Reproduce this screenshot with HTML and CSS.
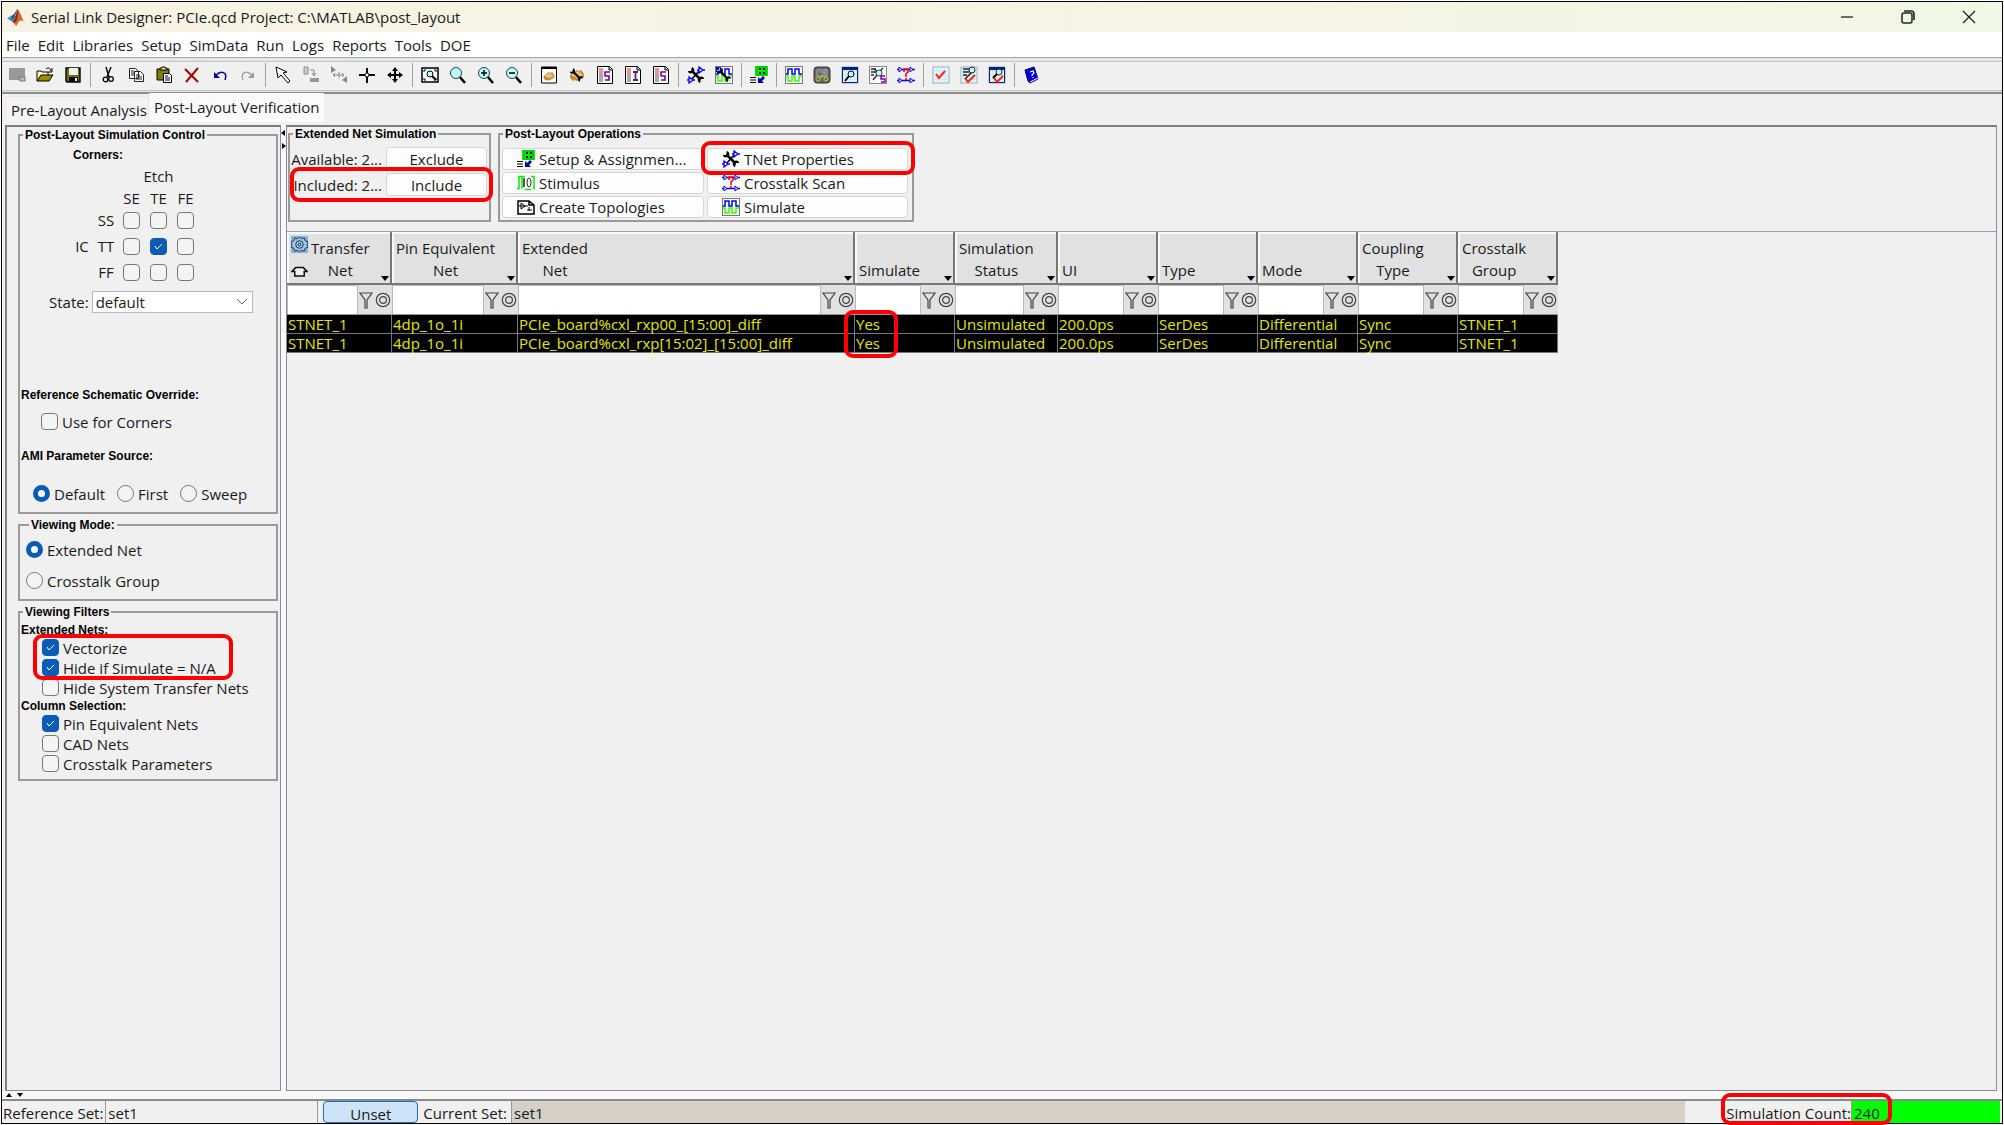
FILE: index.html
```html
<!DOCTYPE html>
<html lang="en">
<head>
<meta charset="utf-8">
<title>Serial Link Designer</title>
<link rel="stylesheet" href="styles.css">
</head>
<body>
<svg class="defs" aria-hidden="true">
  <symbol id="wrench" viewBox="0 0 18 18"><path d="M5 5l8 8" stroke="#000" stroke-width="2.600" fill="none"/><path d="M4 1v3H1M14 17v-3h3" fill="none" stroke="#f0f0f0" stroke-width="1"/><path d="M5 1c3 1 3 5 0 6-2 1-4 0-4-2l3 0zM13 17c-3-1-3-5 0-6 2-1 4 0 4 2l-3 0z"/></symbol>
  <symbol id="amps" viewBox="0 0 18 18"><path d="M2 11v6l4-3zM0 14h2M6 14h2M12 1v6l4-3zM10 4h2M16 4h2" stroke="#00f" stroke-width="1.300" fill="#fff"/></symbol>
  <symbol id="tnet" viewBox="0 0 18 18"><path d="M5 13l7-8" stroke="#000" stroke-width="1.500"/><use href="#wrench"/><use href="#amps"/></symbol>
  <symbol id="scan" viewBox="0 0 18 18"><path d="M0 3.500h18M0 14.500h18" stroke="#00f" stroke-width="1.300"/><path d="M2 1v5l3-2.500zM13 1v5l3-2.500zM2 12v5l3-2.500zM13 12v5l3-2.500z" stroke="#00f" fill="#fff"/><path d="M7 6V3h4v3L9 8v3M9 12v2" stroke="#f00" stroke-width="1.600" fill="none"/></symbol>
  <symbol id="waves" viewBox="0 0 18 18"><rect x=".5" y=".5" width="17" height="17" fill="#fff" stroke="#777"/><path d="M1 8h2V3h4v5h3V3h4v5h3" stroke="#00f" stroke-width="1.5" fill="none"/><path d="M1 10h2v5h4v-5h3v5h4v-5h3" stroke="#3f0" stroke-width="1.5" fill="none"/></symbol>
  <symbol id="assign" viewBox="0 0 18 18"><path d="M5 0h13v10H5z" fill="#0e0"/><path d="M7 1h9v8H7z" fill="none" stroke="#00b000"/><path d="M9 2h2v2H9zM13 2h2v2h-2zM9 6h2v2H9zM13 6h2v2h-2z" fill="#000"/><path d="M0 11.500h6M0 14h6M0 16.500h6" stroke="#000"/><path d="M8 11v6h6l-2-2 3-3-2-2-3 3z" fill="#00a"/></symbol>
  <symbol id="lens" viewBox="0 0 18 18"><path d="M10 10l6 7" stroke="#000" stroke-width="2.500"/><circle cx="7" cy="7" r="5.5" fill="#bff" stroke="#244"/></symbol>
  <symbol id="report" viewBox="0 0 18 18"><path d="M1.5.5h12l3 3v14h-15z" fill="#fff" stroke="#000"/><path d="M13 1v3h3" fill="#ccc" stroke="#000"/><path d="M3 3h4M3 5h4M3 7h4" stroke="#e22"/><path d="M3 9h4M3 11h4M3 13h4M3 15h4" stroke="#555"/></symbol>
  <symbol id="chip" viewBox="0 0 18 18"><path d="M2 9l7-5 2 1 2-1 3 4v3l-7 4-2-1-2 1-3-3z" fill="#c88a3a"/><path d="M3 9l7-4 5 4-6 3z" fill="#edc27c"/></symbol>
  <symbol id="sheet" viewBox="0 0 18 18"><rect x="1" y="1" width="16" height="16" fill="#eef6fc" stroke="#9ab"/><path d="M1 5h16M1 9h16M1 13h16M5 1v16M9 1v16M13 1v16" stroke="#bfe6f5"/></symbol>
  <symbol id="funnel" viewBox="0 0 14 18"><path d="M1 2h12L8 9v8H6V9z" fill="none" stroke="#444" stroke-width="1.200"/></symbol>
  <symbol id="rings" viewBox="0 0 16 16"><circle cx="8" cy="8" r="6.7" fill="none" stroke="#444" stroke-width="1.2"/><circle cx="8" cy="8" r="3.4" fill="none" stroke="#444" stroke-width="1.2"/></symbol>
</svg>

<div class="window">
  <header class="titlebar">
    <svg class="logo" viewBox="0 0 18 18"><path d="M0 10l5-3 3 2-3 4z" fill="#3d8fc4"/><path d="M5 7c3-1 4-5 6-7l-3 9-3 4z" fill="#255a86"/><path d="M11 0c3 2 4 9 7 13-3-1-5-2-8 5L5 13c3 0 5-8 6-13z" fill="#d9642a"/><path d="M11 0c1 6 0 12-2 14l-4-1c3 0 5-8 6-13z" fill="#7c2b1b"/></svg>
    <h1>Serial Link Designer: PCIe.qcd Project: C:\MATLAB\post_layout</h1>
    <div class="controls">
      <button aria-label="Minimize"><svg viewBox="0 0 14 14"><path d="M1 7h12" stroke="#333" stroke-width="1.4"/></svg></button>
      <button aria-label="Restore"><svg viewBox="0 0 14 14"><path d="M3 1h7q3 0 3 3v6" fill="none" stroke="#222" stroke-width="1.6"/><rect x="1" y="3" width="10" height="10" rx="2" fill="none" stroke="#222" stroke-width="1.5"/></svg></button>
      <button aria-label="Close"><svg viewBox="0 0 14 14"><path d="M1 1l12 12M13 1L1 13" stroke="#222" stroke-width="1.3"/></svg></button>
    </div>
  </header>

  <nav class="menu">
    <a href="#">File</a><a href="#">Edit</a><a href="#">Libraries</a><a href="#">Setup</a><a href="#">SimData</a><a href="#">Run</a><a href="#">Logs</a><a href="#">Reports</a><a href="#">Tools</a><a href="#">DOE</a>
  </nav>

  <div class="toolbar">
    <div class="group">
      <button aria-label="New"><svg viewBox="0 0 18 18"><path d="M1 2h16v13h-5l-2-1H1z" fill="#999"/><path d="M11 11h6v4h-5z" fill="#bbb" stroke="#777"/></svg></button>
      <button aria-label="Open"><svg viewBox="0 0 18 18"><path d="M1 15V5h4l1 1h6v3" fill="#ffc" stroke="#000"/><path d="M1 15l4-6h12l-4 6z" fill="#998c00" stroke="#000"/><path d="M10 3c2-2 4-1 5 2M16 2v4h-4" fill="none" stroke="#000"/></svg></button>
      <button aria-label="Save"><svg viewBox="0 0 18 18"><path d="M2 2h14v14H3l-1-1z" fill="#776f00" stroke="#000" stroke-width="1.4"/><path d="M5 2h9v7H5z" fill="#eee"/><path d="M5 11h9v5H5z" fill="#000"/><path d="M11 12h2v3h-2z" fill="#eee"/></svg></button>
    </div>
    <div class="group">
      <button aria-label="Cut"><svg viewBox="0 0 18 18"><path d="M7 1l3 10M12 1L8 11" stroke="#000" stroke-width="1.4"/><circle cx="6.500" cy="13.500" r="2.300" fill="none" stroke="#000" stroke-width="1.300"/><circle cx="12" cy="13" r="2.300" fill="none" stroke="#000" stroke-width="1.300"/></svg></button>
      <button aria-label="Copy"><svg viewBox="0 0 18 18"><path d="M2.500 2.500h6l3 3v7h-9zM7.500 5.500h6l3 3v7h-9z" fill="#fff" stroke="#222"/><path d="M4 5h3M4 7h3M4 9h3M9 9h4M9 11h6M9 13h6" stroke="#222"/></svg></button>
      <button aria-label="Paste"><svg viewBox="0 0 18 18"><path d="M2 3h12v11H2z" fill="#857c00" stroke="#000"/><path d="M5 4V2h2V1h3v1h2v2z" fill="#ee8" stroke="#000"/><path d="M8.500 7.500h6l2 2v7h-8z" fill="#fff" stroke="#000"/><path d="M10 10h3M10 12h5M10 14h5" stroke="#006"/></svg></button>
      <button aria-label="Delete"><svg viewBox="0 0 18 18"><path d="M2 3l13 13M15 2L3 16" stroke="#a00" stroke-width="2" fill="none"/></svg></button>
      <button aria-label="Undo"><svg viewBox="0 0 18 18"><path d="M5 9c5-5 12-3 9 5" fill="none" stroke="#00a" stroke-width="1.500"/><path d="M3 6v6h6z" fill="#00a"/></svg></button>
      <button aria-label="Redo"><svg viewBox="0 0 18 18"><path d="M13 9C8 4 1 6 4 14" fill="none" stroke="#999" stroke-width="1.300"/><path d="M15 6v6H9z" fill="#999"/></svg></button>
    </div>
    <div class="group">
      <button aria-label="Select"><svg viewBox="0 0 18 18"><path d="M2 1l2 11 3-3 7 8 2-2-7-8 4-1z" fill="#fff" stroke="#000"/></svg></button>
      <button aria-label="Rotate"><svg viewBox="0 0 18 18"><path d="M2 1h4v7H2z" fill="#ccc" stroke="#888"/><path d="M8 12h9v4H8z" fill="#999"/><path d="M8 4h4v5M10 7l2 3 2-3" fill="none" stroke="#888"/></svg></button>
      <button aria-label="Mirror"><svg viewBox="0 0 18 18"><path d="M1 0v7l5-3zM17 10v7l-5-3z" fill="#888"/><path d="M3 9h11M5 7l-2 2 2 2M9 6v6M12 7l2 2-2 2" stroke="#888" fill="none"/></svg></button>
      <button aria-label="Center"><svg viewBox="0 0 18 18"><path d="M9 2v5M9 11v6M1 9h6M11 9h6" stroke="#000" stroke-width="2"/><circle cx="9" cy="9" r="2" fill="#fff" stroke="#000"/></svg></button>
      <button aria-label="Pan"><svg viewBox="0 0 18 18"><path d="M9 3v12M3 9h12" stroke="#000" stroke-width="2"/><path d="M9 1l3 4H6zM9 17l3-4H6zM1 9l4-3v6zM17 9l-4-3v6z"/></svg></button>
    </div>
    <div class="group">
      <button aria-label="Zoom fit"><svg viewBox="0 0 18 18"><path d="M1 2h16v14H1z" fill="#fff" stroke="#000" stroke-width="1.500"/><path d="M3 12v2h2M15 12v2h-2M3 6V4h2M15 6V4h-2" stroke="#000" fill="none"/><circle cx="9" cy="8" r="3" fill="#bff" stroke="#000"/><path d="M11 10l4 4" stroke="#000" stroke-width="2"/></svg></button>
      <button aria-label="Zoom"><svg><use href="#lens"/></svg></button>
      <button aria-label="Zoom in"><svg viewBox="0 0 18 18"><use href="#lens"/><path d="M4 7h6M7 4v6" stroke="#000" stroke-width="1.500"/></svg></button>
      <button aria-label="Zoom out"><svg viewBox="0 0 18 18"><use href="#lens"/><path d="M4 7h6" stroke="#000" stroke-width="1.500"/></svg></button>
    </div>
    <div class="group">
      <button aria-label="Part"><svg viewBox="0 0 18 18"><path d="M1.500 1v16h15V1z" fill="#fff" stroke="#000"/><path d="M1 1h16v2H1z"/><use href="#chip" x="2" y="3" width="14" height="14"/></svg></button>
      <button aria-label="Part setup"><svg viewBox="0 0 18 18"><use href="#chip"/><use href="#wrench" x="1" y="1" width="15" height="16"/></svg></button>
      <button aria-label="S report"><svg viewBox="0 0 18 18"><use href="#report"/><path d="M14 6H9v4h4v4H9" fill="none" stroke="#70a" stroke-width="1.600"/></svg></button>
      <button aria-label="I report"><svg viewBox="0 0 18 18"><use href="#report"/><path d="M9 6h5M9 14h5M11.500 6v8" fill="none" stroke="#527" stroke-width="1.800"/></svg></button>
      <button aria-label="Summary"><svg viewBox="0 0 18 18"><use href="#report"/><path d="M14 6H9v4h4v4H9" fill="none" stroke="#70a" stroke-width="1.600"/></svg></button>
    </div>
    <div class="group">
      <button aria-label="Net setup"><svg><use href="#tnet"/></svg></button>
      <button aria-label="Waveform setup"><svg viewBox="0 0 18 18"><use href="#waves"/><path d="M1 1h5v5H1z" fill="#00c"/><use href="#wrench" x="1" y="1" width="16" height="16"/></svg></button>
    </div>
    <div class="group"><button aria-label="Assign"><svg><use href="#assign"/></svg></button></div>
    <div class="group">
      <button aria-label="Simulate"><svg><use href="#waves"/></svg></button>
      <button aria-label="Queue"><svg viewBox="0 0 18 18"><rect x="1" y="1" width="16" height="16" rx="3" fill="#666" stroke="#333"/><path d="M4 4h10v6H4zM6 6h5M12 3v9M7 11l5-5" stroke="#aaa" fill="none"/><circle cx="5" cy="13" r="2" fill="none" stroke="#ad0"/><circle cx="13" cy="13" r="2" fill="none" stroke="#ad0"/><path d="M7 12l4-2" stroke="#ad0"/></svg></button>
      <button aria-label="Results"><svg viewBox="0 0 18 18"><use href="#sheet"/><path d="M1.500 1.500h15v15h-15z" fill="none" stroke="#028"/><path d="M1 1h16v3H1z" fill="#028"/><circle cx="10" cy="8" r="3" fill="#bff" stroke="#000"/><path d="M8 10l-4 5" stroke="#000" stroke-width="2"/></svg></button>
      <button aria-label="Report view"><svg viewBox="0 0 18 18"><rect x=".5" y=".5" width="17" height="17" fill="#fff" stroke="#888"/><path d="M2 3h5M2 6h5M2 9h3M5 3l4 3M14 2l-3 3M8 9l-4 5" stroke="#222" stroke-width="1.300"/><circle cx="10" cy="7" r="3" fill="#bff" stroke="#246"/><path d="M16 10h-4v3h4v3h-4" fill="none" stroke="#70a" stroke-width="1.500"/></svg></button>
      <button aria-label="Crosstalk scan"><svg><use href="#scan"/></svg></button>
    </div>
    <div class="group">
      <button aria-label="Check"><svg viewBox="0 0 18 18"><use href="#sheet"/><path d="M4 8l3 4 6-7" fill="none" stroke="#f20" stroke-width="2"/></svg></button>
      <button aria-label="Check report"><svg viewBox="0 0 18 18"><use href="#sheet"/><path d="M3 3h6M3 6h6M3 9h4M5 13l7-7" stroke="#222" stroke-width="1.500"/><circle cx="12" cy="4" r="3" fill="#bff" stroke="#222"/><path d="M5 12l3 4 7-7" fill="none" stroke="#f20" stroke-width="2"/></svg></button>
      <button aria-label="Check results"><svg viewBox="0 0 18 18"><use href="#sheet"/><path d="M1.500 1.500h15v15h-15z" fill="none" stroke="#028"/><path d="M1 1h16v3H1z" fill="#028"/><circle cx="11" cy="6" r="3" fill="#bff" stroke="#222"/><path d="M9 8l-4 4" stroke="#000" stroke-width="2"/><path d="M6 12l3 4 6-6" fill="none" stroke="#f20" stroke-width="2"/></svg></button>
    </div>
    <div class="group">
      <button aria-label="Help"><svg viewBox="0 0 18 18"><path d="M2 4l9-3 4 12-8 4-2-2z" fill="#00d" stroke="#006"/><path d="M7 16l8-4" stroke="#fff"/><path d="M7 6l3-1 1 2-2 2v1M10 11v1" fill="none" stroke="#fff" stroke-width="1.200"/></svg></button>
    </div>
  </div>

  <div class="tabs" role="tablist">
    <button role="tab">Pre-Layout Analysis</button>
    <button role="tab" class="active" aria-selected="true">Post-Layout Verification</button>
  </div>

  <div class="main">
    <aside class="side">
      <fieldset class="box sim">
        <legend>Post-Layout Simulation Control</legend>
        <h2 class="corners-title">Corners:</h2>
        <div class="corners">
          <span class="etch">Etch</span>
          <span class="c3">SE</span><span>TE</span><span>FE</span>
          <span class="c2">SS</span><input type="checkbox" aria-label="SS SE"><input type="checkbox" aria-label="SS TE"><input type="checkbox" aria-label="SS FE">
          <span>IC</span><span>TT</span><input type="checkbox" aria-label="TT SE"><input type="checkbox" aria-label="TT TE" checked><input type="checkbox" aria-label="TT FE">
          <span class="c2">FF</span><input type="checkbox" aria-label="FF SE"><input type="checkbox" aria-label="FF TE"><input type="checkbox" aria-label="FF FE">
        </div>
        <div class="state">
          <label for="state">State:</label>
          <select id="state"><option>default</option></select>
        </div>
        <h2>Reference Schematic Override:</h2>
        <label class="opt use"><input type="checkbox">Use for Corners</label>
        <h2>AMI Parameter Source:</h2>
        <div class="radios">
          <label class="opt"><input type="radio" name="ami" checked>Default</label>
          <label class="opt"><input type="radio" name="ami">First</label>
          <label class="opt"><input type="radio" name="ami">Sweep</label>
        </div>
      </fieldset>
      <fieldset class="box mode">
        <legend>Viewing Mode:</legend>
        <label class="opt"><input type="radio" name="mode" checked>Extended Net</label>
        <label class="opt"><input type="radio" name="mode">Crosstalk Group</label>
      </fieldset>
      <fieldset class="box filters">
        <legend>Viewing Filters</legend>
        <h2>Extended Nets:</h2>
        <div class="checks">
          <label class="opt"><input type="checkbox" checked>Vectorize</label>
          <label class="opt"><input type="checkbox" checked>Hide if Simulate = N/A</label>
          <label class="opt"><input type="checkbox">Hide System Transfer Nets</label>
          <span class="mark mark-filters"></span>
        </div>
        <h2>Column Selection:</h2>
        <div class="checks">
          <label class="opt"><input type="checkbox" checked>Pin Equivalent Nets</label>
          <label class="opt"><input type="checkbox">CAD Nets</label>
          <label class="opt"><input type="checkbox">Crosstalk Parameters</label>
        </div>
      </fieldset>
    </aside>

    <div class="splitter"><svg viewBox="0 0 5 22"><path d="M4 1v6L0 4zM1 14v6l4-3z"/></svg></div>

    <section class="content">
      <div class="panels">
        <fieldset class="box netsim">
          <legend>Extended Net Simulation</legend>
          <div class="netrows">
            <span>Available: 2...</span><button class="btn">Exclude</button>
            <span>Included: 2...</span><button class="btn">Include</button>
            <i class="mark mark-included"></i>
          </div>
        </fieldset>
        <fieldset class="box ops">
          <legend>Post-Layout Operations</legend>
          <div class="opgrid">
            <button class="btn"><svg><use href="#assign"/></svg>Setup &amp; Assignmen...</button>
            <button class="btn"><svg><use href="#tnet"/></svg>TNet Properties</button>
            <button class="btn"><svg viewBox="0 0 18 18"><path d="M0 14.500h2v-12h3M14 2.500h3v12h1M5 2.500v12M5 2.500h3M8 15.500h6" fill="none" stroke="#0e0" stroke-width="1.500"/><path d="M7 4v9" stroke="#222" stroke-width="1.500"/><ellipse cx="12" cy="8.500" rx="2" ry="4.500" fill="none" stroke="#222"/></svg>Stimulus</button>
            <button class="btn"><svg><use href="#scan"/></svg>Crosstalk Scan</button>
            <button class="btn"><svg viewBox="0 0 18 18"><path d="M1 3h11l5 4v9H1zM12 3v4h5" fill="#fff" stroke="#000" stroke-width="1.500"/><path d="M4 5v6l4-3zM2 8h9M10 12h5M12 9v4" fill="none" stroke="#000"/></svg>Create Topologies</button>
            <button class="btn"><svg><use href="#waves"/></svg>Simulate</button>
            <i class="mark mark-tnet"></i>
          </div>
        </fieldset>
      </div>
      <div class="scroll">
        <table>
          <colgroup><col class="w-transfer"><col class="w-pin"><col class="w-ext"><col><col class="w-status"><col><col><col><col><col></colgroup>
          <thead>
            <tr>
              <th><div class="head"><span class="hicons"><svg viewBox="0 0 18 18"><path d="M0 0h18v18H0z" fill="#7fb3e0"/><path d="M9 1l2 2 3-1 1 3 3 1-1 3 1 3-3 1-1 3-3-1-2 2-2-2-3 1-1-3-3-1 1-3-1-3 3-1 1-3 3 1z" fill="#9cc6ea" stroke="#234"/><circle cx="9" cy="9" r="4" fill="none" stroke="#234"/><circle cx="9" cy="9" r="1.500" fill="none" stroke="#234"/></svg><svg viewBox="0 0 18 18"><path d="M4 16v-5H1l4-4h8l4 4h-3v5z" fill="#eee" stroke="#111" stroke-width="1.600"/></svg></span><span>Transfer<br>Net</span><b class="arrow"></b></div></th>
              <th><div class="head"><span>Pin Equivalent<br>Net</span><b class="arrow"></b></div></th>
              <th><div class="head"><span>Extended<br>Net</span><b class="arrow"></b></div></th>
              <th><div class="head"><span>Simulate</span><b class="arrow"></b></div></th>
              <th><div class="head"><span>Simulation<br>Status</span><b class="arrow"></b></div></th>
              <th><div class="head"><span>UI</span><b class="arrow"></b></div></th>
              <th><div class="head"><span>Type</span><b class="arrow"></b></div></th>
              <th><div class="head"><span>Mode</span><b class="arrow"></b></div></th>
              <th><div class="head"><span>Coupling<br>Type</span><b class="arrow"></b></div></th>
              <th><div class="head"><span>Crosstalk<br>Group</span><b class="arrow"></b></div></th>
            </tr>
            <tr class="filter">
              <td><div><input aria-label="Filter transfer net"><svg class="fn"><use href="#funnel"/></svg><svg class="rg"><use href="#rings"/></svg></div></td>
              <td><div><input aria-label="Filter pin equivalent net"><svg class="fn"><use href="#funnel"/></svg><svg class="rg"><use href="#rings"/></svg></div></td>
              <td><div><input aria-label="Filter extended net"><svg class="fn"><use href="#funnel"/></svg><svg class="rg"><use href="#rings"/></svg></div></td>
              <td><div><input aria-label="Filter simulate"><svg class="fn"><use href="#funnel"/></svg><svg class="rg"><use href="#rings"/></svg></div></td>
              <td><div><input aria-label="Filter status"><svg class="fn"><use href="#funnel"/></svg><svg class="rg"><use href="#rings"/></svg></div></td>
              <td><div><input aria-label="Filter UI"><svg class="fn"><use href="#funnel"/></svg><svg class="rg"><use href="#rings"/></svg></div></td>
              <td><div><input aria-label="Filter type"><svg class="fn"><use href="#funnel"/></svg><svg class="rg"><use href="#rings"/></svg></div></td>
              <td><div><input aria-label="Filter mode"><svg class="fn"><use href="#funnel"/></svg><svg class="rg"><use href="#rings"/></svg></div></td>
              <td><div><input aria-label="Filter coupling"><svg class="fn"><use href="#funnel"/></svg><svg class="rg"><use href="#rings"/></svg></div></td>
              <td><div><input aria-label="Filter group"><svg class="fn"><use href="#funnel"/></svg><svg class="rg"><use href="#rings"/></svg></div></td>
            </tr>
          </thead>
          <tbody>
            <tr><td>STNET_1</td><td>4dp_1o_1i</td><td>PCIe_board%cxl_rxp00_[15:00]_diff</td><td class="anchor">Yes<i class="mark mark-yes"></i></td><td>Unsimulated</td><td>200.0ps</td><td>SerDes</td><td>Differential</td><td>Sync</td><td>STNET_1</td></tr>
            <tr><td>STNET_1</td><td>4dp_1o_1i</td><td>PCIe_board%cxl_rxp[15:02]_[15:00]_diff</td><td>Yes</td><td>Unsimulated</td><td>200.0ps</td><td>SerDes</td><td>Differential</td><td>Sync</td><td>STNET_1</td></tr>
          </tbody>
        </table>
      </div>
    </section>
  </div>

  <div class="hsplit"><svg viewBox="0 0 22 6"><path d="M1 5h6L4 1zM12 1h6l-3 4z"/></svg></div>

  <footer class="status">
    <label for="refset">Reference Set:</label>
    <input id="refset" class="refset" value="set1" readonly>
    <button class="unset">Unset</button>
    <label for="curset">Current Set:</label>
    <input id="curset" class="curset" value="set1" readonly>
    <div class="count"><label for="simcount">Simulation Count:</label><input id="simcount" value="240" readonly><i class="mark mark-count"></i></div>
  </footer>
</div>
</body>
</html>
```
FILE: styles.css
```css
* { box-sizing: border-box; }
body {
  margin: 0;
  padding: 1px;
  background: #fff;
  color: #1a1a1a;
  font: 15px/20px "Open Sans", "Noto Sans", sans-serif;
}
button, input, select { font: inherit; color: inherit; margin: 0; }
button { border: 0; background: none; padding: 0; }
svg { display: block; }
.defs { position: absolute; width: 0; height: 0; }
.window {
  display: flex;
  flex-direction: column;
  height: calc(100vh - 2px);
  border: 1px solid #000;
  background: #f0f0f0;
}

/* Title bar and menu */
.titlebar {
  display: flex;
  align-items: center;
  flex: none;
  height: 30px;
  padding-left: 5px;
  background: linear-gradient(90deg, #f7f3e4, #f2f6e4);
}
.logo { width: 17px; height: 17px; margin-right: 7px; }
.titlebar h1 { margin: 0; font-size: 15px; font-weight: 400; }
.controls { display: flex; gap: 47px; margin-left: auto; padding-right: 26px; }
.controls svg { width: 14px; height: 14px; }
.menu {
  display: flex;
  gap: 8px;
  flex: none;
  height: 25px;
  padding: 3px 0 0 4px;
  background: #fff;
}
.menu a { color: inherit; text-decoration: none; }

/* Toolbar */
.toolbar {
  display: flex;
  align-items: center;
  flex: none;
  height: 37px;
  border-top: 1px solid #a5a5a5;
  border-bottom: 2px solid #8c8c8c;
  box-shadow: inset 0 3px #e6e6e6, inset 0 4px #c4c4c4, inset 0 -1px #e6e6e6, inset 0 -2px #c4c4c4;
}
.group { display: flex; align-items: center; height: 24px; padding: 0 3px; border-left: 1px solid #a0a0a0; }
.group:first-child { padding-left: 1px; border-left: 0; }
.group button { display: grid; place-items: center; width: 28px; height: 24px; }
.group svg { width: 18px; height: 18px; }

/* Tabs */
.tabs { display: flex; align-items: flex-end; flex: none; height: 31px; padding: 0 3px 3px; }
.tabs button { height: 26px; padding: 0 1px 0 5px; background: #f3f3f3; border: 1px solid #e6e6e6; border-bottom: 0; }
.tabs .active { height: 29px; padding: 0 4px 2px; background: #fafafa; border-color: #fafafa; }

/* Main area */
.main { display: flex; flex: 1; min-height: 0; padding: 0 5px 0 3px; }
.side {
  flex: none;
  width: 276px;
  padding: 1px 2px 0 11px;
  border: 1px solid #8a8e94;
  border-top: 2px solid #7d7d7d;
  border-left: 2px solid #7d8085;
}
.box { min-width: 0; margin: 0; padding: 0; border: 2px solid #9a9a9a; }
.box legend, h2 { font: bold 12px/16px "Liberation Sans", Arial, sans-serif; color: #000; }
.box legend { margin-left: 3px; padding: 0 2px; line-height: 14px; }
h2 { margin: 0 0 0 1px; }
.sim { height: 386px; }
.corners-title { margin: 5px 0 0 53px; }
.corners {
  display: grid;
  grid-template-columns: 24px 24px 27px 27px 27px;
  grid-template-rows: 26px 18px 26px 26px 26px;
  width: 129px;
  margin-left: 50px;
  align-items: center;
  justify-items: center;
}
.etch { grid-column: 3 / 6; }
.c3 { grid-column: 3; }
.c2 { grid-column: 2; }
.state { display: flex; align-items: center; gap: 3px; margin: 6px 0 74px 29px; }
select {
  appearance: none;
  width: 161px;
  height: 22px;
  padding: 0 3px;
  border: 1px solid #b8b8b8;
  border-radius: 0;
  background: #fff url("data:image/svg+xml,%3Csvg xmlns='http://www.w3.org/2000/svg' width='12' height='8'%3E%3Cpath d='M1 1l5 5 5-5' fill='none' stroke='%23666'/%3E%3C/svg%3E") no-repeat right 4px center;
}
.opt { display: flex; align-items: center; gap: 4px; }
.opt input { margin-bottom: 2px; }
input[type="checkbox"], input[type="radio"] {
  appearance: none;
  flex: none;
  width: 17px;
  height: 17px;
  border: 1px solid #777;
  border-radius: 4px;
  background: #f4f4f4;
}
input[type="radio"] { border-radius: 50%; }
input[type="checkbox"]:checked {
  border-color: #0a5cb8;
  background: #0a5cb8 url("data:image/svg+xml,%3Csvg xmlns='http://www.w3.org/2000/svg' width='11' height='9'%3E%3Cpath d='M2 4l2 3 5-5' fill='none' stroke='%23fff'/%3E%3C/svg%3E") no-repeat center;
}
input[type="radio"]:checked { border: 5px solid #0a5cb8; background: #fff; }
.use { margin: 9px 0 16px 21px; }
.radios { display: flex; gap: 12px; margin: 20px 0 0 13px; }
.mode { height: 83px; margin-top: 4px; padding-left: 6px; }
.mode .opt { margin-top: 8px; }
.mode .opt + .opt { margin-top: 11px; }
.filters { height: 176px; margin-top: 4px; }
.filters h2 { margin-left: 1px; }
.filters legend + h2 { margin-top: 3px; }
.checks { position: relative; padding-left: 22px; }

.splitter { flex: none; width: 5px; padding-top: 4px; background: #f8f8f8; }
.splitter svg { width: 5px; height: 22px; }

/* Right side */
.content {
  display: flex;
  flex-direction: column;
  flex: 1;
  min-width: 0;
  border: 1px solid #8a8e94;
  border-top: 2px solid #7d7d7d;
}
.panels { display: flex; gap: 7px; flex: none; height: 104px; padding: 0 0 0 1px; }
.panels .box { height: 95px; }
.netsim { width: 203px; }
.netrows {
  position: relative;
  display: grid;
  grid-template-columns: 90px 101px;
  grid-auto-rows: 23px;
  gap: 3px 4px;
  padding-left: 2px;
  margin-top: 6px;
  justify-items: end;
  align-items: center;
  white-space: nowrap;
}
.btn {
  width: 100%;
  height: 100%;
  border: 1px solid #d6d6d6;
  border-radius: 4px;
  background: #fdfdfd;
}
.ops { width: 416px; }
.opgrid {
  position: relative;
  display: grid;
  grid-template-columns: 202px 201px;
  grid-auto-rows: 22px;
  gap: 2px 3px;
  padding-left: 2px;
  margin-top: 7px;
}
.opgrid .btn { display: flex; align-items: center; gap: 4px; padding-left: 14px; white-space: nowrap; }
.opgrid svg { width: 18px; height: 18px; }
.scroll { flex: 1; min-height: 0; border-top: 1px solid #9aa0a6; }

table { width: 1271px; table-layout: fixed; border-collapse: separate; border-spacing: 0; }
.w-transfer { width: 105px; }
.w-pin { width: 126px; }
.w-ext { width: 337px; }
.w-status { width: 103px; }
th, td { padding: 0; font-weight: 400; text-align: left; }
th { background: #e1e1e1; border-right: 2px solid #777; border-bottom: 2px solid #777; box-shadow: inset 2px 2px #fafafa; }
.head { display: flex; align-items: flex-end; height: 51px; padding: 0 0 2px 4px; line-height: 22px; text-align: center; white-space: nowrap; }
.hicons { display: flex; flex-direction: column; gap: 8px; margin-right: 3px; padding-bottom: 3px; }
.hicons svg { width: 17px; height: 17px; }
.arrow { width: 8px; height: 5px; margin: 0 1px 0 auto; background: #000; clip-path: polygon(0 0, 100% 0, 50% 100%); }
.filter td { height: 30px; background: #e1e1e1; border-bottom: 1px solid #999; }
.filter div { display: flex; align-items: center; height: 29px; }
.filter input { flex: 1; min-width: 0; height: 29px; padding: 0 2px; border: 1px solid #bbb; border-width: 1px 1px 0; border-radius: 0; background: #fff; }
.fn { width: 14px; height: 18px; margin-left: 1px; }
.rg { width: 16px; height: 16px; margin: 0 1px 0 2px; }
tbody td {
  height: 19px;
  line-height: 18px;
  padding-left: 1px;
  background: #000;
  color: #e6e600;
  border-right: 1px solid #777;
  border-bottom: 1px solid #777;
  white-space: nowrap;
}
.anchor { position: relative; }

/* Status bar */
.hsplit { flex: none; height: 8px; padding: 1px 3px; background: #f8f8f8; }
.hsplit svg { width: 22px; height: 6px; }
.status { display: flex; align-items: center; flex: none; height: 24px; padding: 0 2px 0 1px; border-top: 2px solid #8a8a8a; white-space: nowrap; }
.status label, .status input, .unset { padding-top: 2px; }
.status input { height: 22px; padding: 2px 2px 0; border: 0; border-left: 1px solid #999; border-radius: 0; background: #f0f0f0; }
.status .refset { width: 213px; margin: 0 5px 0 2px; border-right: 1px solid #999; }
.unset { width: 95px; height: 22px; margin-right: 5px; border: 1px solid #1a6fc0; border-radius: 4px; background: #cde4f8; }
.status .curset { flex: 1; min-width: 0; margin: 0 41px 0 4px; background: #d4d0c8; }
.count { position: relative; display: flex; align-items: center; }
.count input { width: 149px; background: #0f0; }

/* Red highlight frames */
.mark { position: absolute; border: 4px solid #f00; border-radius: 9px; pointer-events: none; }
.mark-filters { left: 13px; top: -4px; width: 200px; height: 46px; }
.mark-included { left: 0; top: 20px; width: 203px; height: 35px; }
.mark-tnet { left: 201px; top: -7px; width: 214px; height: 34px; }
.mark-yes { left: -11px; top: -5px; width: 54px; height: 48px; }
.mark-count { left: -5px; top: -8px; width: 171px; height: 32px; }
```
